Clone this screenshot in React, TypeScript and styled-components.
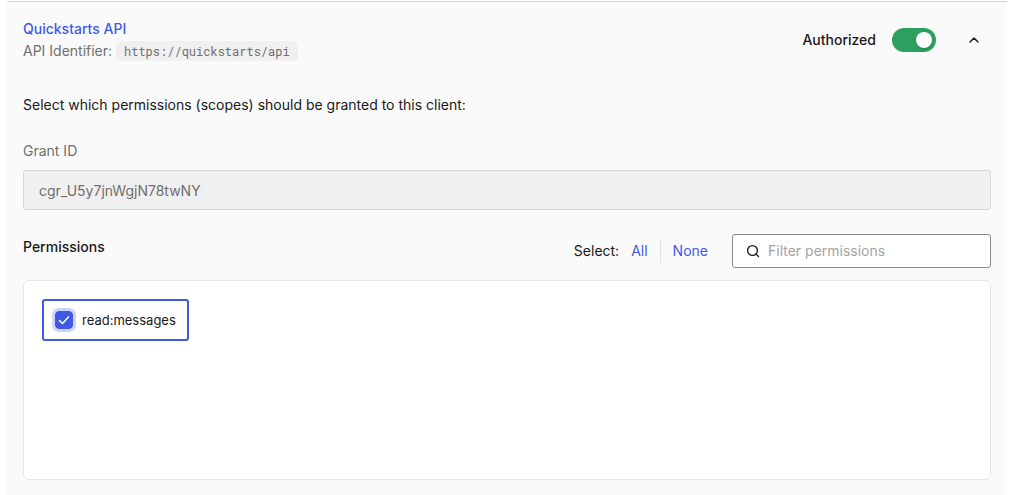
import React, { useState } from "react";
import styled, { createGlobalStyle } from "styled-components";

const GlobalStyle = createGlobalStyle`
  *, *::before, *::after { box-sizing: border-box; }
  body {
    margin: 0;
    background: #ffffff;
    color: #191919;
    font-family: Inter, "Liberation Sans", sans-serif;
    font-size: 14px;
    line-height: 22px;
  }
  button, input { font: inherit; letter-spacing: inherit; }
`;

const Panel = styled.main`
  margin: 1px 4px 0 7px;
  padding: 16px 16px 15px;
  border-top: 1px solid #d2d4d4;
  background: #fafafa;
`;

const Header = styled.header`
  display: flex;
  align-items: center;
  justify-content: space-between;
  margin-bottom: 32px;
`;

const Muted = styled.div`
  color: #6f6f6f;
`;

const Link = styled.a`
  color: #3f59e4;
  font-weight: 500;
  text-decoration: none;
`;

const Identifier = styled.code`
  display: inline-block;
  padding: 0 8px;
  border-radius: 4px;
  background: #f0f0f0;
  font-family: "Roboto Mono", "Liberation Mono", monospace;
  font-size: 12px;
  line-height: 20px;
`;

const Actions = styled.div`
  display: flex;
  align-items: center;
`;

const SwitchLabel = styled.label`
  display: flex;
  align-items: center;
  gap: 16px;
  font-weight: 500;
  cursor: pointer;
`;

const Switch = styled.input`
  appearance: none;
  display: flex;
  align-items: center;
  width: 44px;
  height: 24px;
  margin: 0;
  padding: 4px;
  border-radius: 12px;
  background: #8d8d8d;
  cursor: pointer;

  &::before {
    content: "";
    width: 16px;
    height: 16px;
    border-radius: 50%;
    background: #ffffff;
    box-shadow: 0 1px 2px rgba(0, 0, 0, 0.2);
  }
  &:checked {
    justify-content: flex-end;
    background: #2ca05f;
  }
`;

const IconButton = styled.button`
  display: grid;
  place-items: center;
  width: 34px;
  height: 34px;
  margin-left: 21px;
  padding: 0;
  border: 0;
  background: none;
  color: #191919;
  cursor: pointer;
`;

const Intro = styled.p`
  margin: 0 0 24px;
`;

const Field = styled.div`
  display: flex;
  flex-direction: column;
  gap: 8px;
  margin-bottom: 24px;
`;

const FieldLabel = styled.label`
  color: #6f6f6f;
`;

const ReadOnlyInput = styled.input`
  width: 100%;
  height: 40px;
  padding: 0 15px;
  border: 1px solid #d5d5d5;
  border-radius: 3px;
  background: #f0f0f0;
  color: #6f6f6f;
`;

const Toolbar = styled.div`
  display: flex;
  justify-content: space-between;
  margin-bottom: 12px;
`;

const Heading = styled.h2`
  margin: 2px 0 0;
  font-size: 14px;
  font-weight: 500;
`;

const Tools = styled.div`
  display: flex;
  align-items: center;
`;

const Choices = styled.div`
  display: flex;
  align-items: center;
  margin-left: 12px;
`;

const TextButton = styled.button`
  height: 24px;
  padding: 0 12px;
  border: 0;
  background: none;
  color: #3f59e4;
  cursor: pointer;

  &:first-child { padding-left: 0; }
  & + & { border-left: 1px solid #e3e3e3; }
`;

const Search = styled.label`
  display: flex;
  align-items: center;
  gap: 8px;
  width: 259px;
  height: 34px;
  margin-left: 12px;
  padding: 0 13px;
  border: 1px solid #8b8b8b;
  border-radius: 3px;
  background: #ffffff;
`;

const SearchInput = styled.input`
  flex: 1;
  min-width: 0;
  padding: 0;
  border: 0;
  outline: 0;
  background: none;
  color: inherit;

  &::placeholder { color: #a3a3a3; opacity: 1; }
`;

const PermissionList = styled.div`
  display: flex;
  flex-wrap: wrap;
  align-items: flex-start;
  align-content: flex-start;
  min-height: 200px;
  padding: 18px;
  border: 1px solid #e5e5e5;
  border-radius: 6px;
  background: #ffffff;
`;

const Permission = styled.label<{ $selected: boolean }>`
  display: flex;
  align-items: center;
  gap: 9px;
  height: 42px;
  padding: 0 11px;
  border: 2px solid ${(p) => (p.$selected ? "#3f59e4" : "#e5e5e5")};
  border-radius: 3px;
  font-size: 13px;
  cursor: pointer;
`;

const CheckWrap = styled.span`
  display: grid;
  width: 18px;
  height: 18px;

  & > * { grid-area: 1 / 1; }
  svg { pointer-events: none; }
`;

const Checkbox = styled.input`
  appearance: none;
  width: 18px;
  height: 18px;
  margin: 0;
  border: 1px solid #8b8b8b;
  border-radius: 4px;

  &:checked {
    border-color: #3f59e4;
    background: #3f59e4;
    box-shadow: 0 0 0 3px #cfd5f8;
  }
`;

export default function App() {
  const [authorized, setAuthorized] = useState(true);
  const [selected, setSelected] = useState(true);
  const [filter, setFilter] = useState("");

  return (
    <>
      <GlobalStyle />
      <Panel>
        <Header>
          <div>
            <Link href="#api">Quickstarts API</Link>
            <Muted>
              API Identifier: <Identifier>https://quickstarts/api</Identifier>
            </Muted>
          </div>
          <Actions>
            <SwitchLabel>
              Authorized
              <Switch
                type="checkbox"
                role="switch"
                checked={authorized}
                onChange={(e) => setAuthorized(e.target.checked)}
              />
            </SwitchLabel>
            <IconButton type="button" aria-label="Collapse">
              <svg width="16" height="16" viewBox="0 0 16 16" fill="none" stroke="currentColor" strokeWidth="1.5" strokeLinecap="round" strokeLinejoin="round">
                <path d="M4 10l4-4 4 4" />
              </svg>
            </IconButton>
          </Actions>
        </Header>

        <Intro>Select which permissions (scopes) should be granted to this client:</Intro>

        <Field>
          <FieldLabel htmlFor="grant-id">Grant ID</FieldLabel>
          <ReadOnlyInput id="grant-id" readOnly value="cgr_U5y7jnWgjN78twNY" />
        </Field>

        <Toolbar>
          <Heading>Permissions</Heading>
          <Tools>
            Select:
            <Choices>
              <TextButton type="button" onClick={() => setSelected(true)}>All</TextButton>
              <TextButton type="button" onClick={() => setSelected(false)}>None</TextButton>
            </Choices>
            <Search>
              <svg width="14" height="14" viewBox="0 0 14 14" fill="none" stroke="#191919" strokeWidth="1.3" strokeLinecap="round">
                <circle cx="6.5" cy="6.5" r="4.9" />
                <path d="M10.1 10.1l2.4 2.4" />
              </svg>
              <SearchInput
                type="text"
                aria-label="Filter permissions"
                placeholder="Filter permissions"
                value={filter}
                onChange={(e) => setFilter(e.target.value)}
              />
            </Search>
          </Tools>
        </Toolbar>

        <PermissionList>
          {"read:messages".includes(filter) && (
            <Permission $selected={selected}>
              <CheckWrap>
                <Checkbox
                  type="checkbox"
                  checked={selected}
                  onChange={(e) => setSelected(e.target.checked)}
                />
                {selected && (
                  <svg width="18" height="18" viewBox="0 0 18 18" fill="none" stroke="#ffffff" strokeWidth="1.5" strokeLinecap="round" strokeLinejoin="round">
                    <path d="M4.5 9.5l3 3 6-6.5" />
                  </svg>
                )}
              </CheckWrap>
              read:messages
            </Permission>
          )}
        </PermissionList>
      </Panel>
    </>
  );
}
